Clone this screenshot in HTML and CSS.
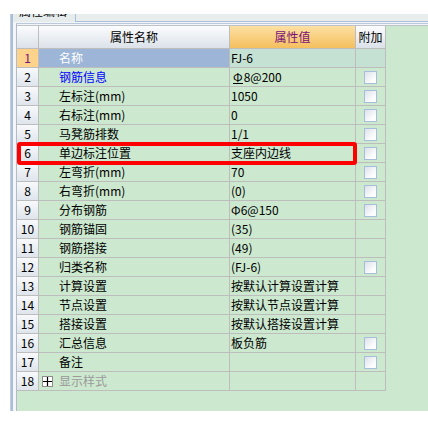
FILE: index.html
```html
<!DOCTYPE html>
<html lang="zh-CN">
<head>
<meta charset="utf-8">
<title>属性编辑</title>
<link rel="stylesheet" href="styles.css">
</head>
<body>
<div class="window">
  <div class="inner">
    <div class="tabstrip">
      <div class="tab"><span class="tab-label">属性编辑</span></div>
      <div class="tabrest"></div>
    </div>
    <div class="panel">
      <div class="sheet">
        <div class="grid-area">
          <table class="grid">
            <colgroup>
              <col class="c-num"><col class="c-name"><col class="c-val"><col class="c-add">
            </colgroup>
            <thead>
              <tr>
                <th class="h-plain"></th>
                <th class="h-plain">属性名称</th>
                <th class="h-active">属性值</th>
                <th class="h-plain">附加</th>
              </tr>
            </thead>
            <tbody>
              <tr class="sel">
                <td class="num num-sel">1</td>
                <td class="name name-sel">名称</td>
                <td class="val val-sel">FJ-6</td>
                <td class="add add-sel"></td>
              </tr>
              <tr>
                <td class="num">2</td>
                <td class="name link">钢筋信息</td>
                <td class="val"><span class="bar-sym">Φ</span>8@200</td>
                <td class="add"><span class="cb"></span></td>
              </tr>
              <tr>
                <td class="num">3</td>
                <td class="name">左标注(mm)</td>
                <td class="val">1050</td>
                <td class="add"><span class="cb"></span></td>
              </tr>
              <tr>
                <td class="num">4</td>
                <td class="name">右标注(mm)</td>
                <td class="val">0</td>
                <td class="add"><span class="cb"></span></td>
              </tr>
              <tr>
                <td class="num">5</td>
                <td class="name">马凳筋排数</td>
                <td class="val">1/1</td>
                <td class="add"><span class="cb"></span></td>
              </tr>
              <tr>
                <td class="num">6</td>
                <td class="name">单边标注位置</td>
                <td class="val">支座内边线</td>
                <td class="add"><span class="cb"></span></td>
              </tr>
              <tr>
                <td class="num">7</td>
                <td class="name">左弯折(mm)</td>
                <td class="val">70</td>
                <td class="add"><span class="cb"></span></td>
              </tr>
              <tr>
                <td class="num">8</td>
                <td class="name">右弯折(mm)</td>
                <td class="val">(0)</td>
                <td class="add"><span class="cb"></span></td>
              </tr>
              <tr>
                <td class="num">9</td>
                <td class="name">分布钢筋</td>
                <td class="val">Φ6@150</td>
                <td class="add"><span class="cb"></span></td>
              </tr>
              <tr>
                <td class="num">10</td>
                <td class="name">钢筋锚固</td>
                <td class="val">(35)</td>
                <td class="add"></td>
              </tr>
              <tr>
                <td class="num">11</td>
                <td class="name">钢筋搭接</td>
                <td class="val">(49)</td>
                <td class="add"></td>
              </tr>
              <tr>
                <td class="num">12</td>
                <td class="name">归类名称</td>
                <td class="val">(FJ-6)</td>
                <td class="add"><span class="cb"></span></td>
              </tr>
              <tr>
                <td class="num">13</td>
                <td class="name">计算设置</td>
                <td class="val">按默认计算设置计算</td>
                <td class="add"></td>
              </tr>
              <tr>
                <td class="num">14</td>
                <td class="name">节点设置</td>
                <td class="val">按默认节点设置计算</td>
                <td class="add"></td>
              </tr>
              <tr>
                <td class="num">15</td>
                <td class="name">搭接设置</td>
                <td class="val">按默认搭接设置计算</td>
                <td class="add"></td>
              </tr>
              <tr>
                <td class="num">16</td>
                <td class="name">汇总信息</td>
                <td class="val">板负筋</td>
                <td class="add"><span class="cb"></span></td>
              </tr>
              <tr>
                <td class="num">17</td>
                <td class="name">备注</td>
                <td class="val"></td>
                <td class="add"><span class="cb"></span></td>
              </tr>
              <tr>
                <td class="num">18</td>
                <td class="name group"><span class="expander"><svg width="9" height="9" viewBox="0 0 9 9"><path d="M0 4.5H9M4.5 0V9" stroke="#000" stroke-width="1.2"/></svg></span><span class="group-label">显示样式</span></td>
                <td class="val"></td>
                <td class="add"></td>
              </tr>
            </tbody>
          </table>
          <div class="mark"></div>
        </div>
      </div>
    </div>
  </div>
</div>
</body>
</html>
```

FILE: styles.css
```css
* { box-sizing: border-box; }

body {
  margin: 0;
  background: #ffffff;
  font-family: "Noto Sans CJK SC", "Noto Sans", sans-serif;
  font-size: 12px;
  color: #000;
}

.window {
  margin: 14px 0 0 10px;
  height: 397px;
  border-left: 1px solid #c6cfd9;
}

.inner {
  height: 100%;
  border-left: 2px solid #a9bed9;
  display: flex;
  flex-direction: column;
}

.tabstrip {
  display: flex;
  height: 8px;
  flex: none;
}

.tab {
  width: 63px;
  height: 8px;
  background: #e6ecec;
  border-right: 1px solid #a9bed9;
  overflow: hidden;
  padding-left: 6px;
}

.tab-label {
  display: block;
  line-height: 12px;
  margin-top: -9px;
  white-space: nowrap;
}

.tabrest {
  flex: 1;
  background: #e8eded;
  border-bottom: 1px solid #a9bed9;
}

.panel {
  flex: 1;
  background: #f3f5f8;
  padding: 1px 0 0 3px;
  display: flex;
  flex-direction: column;
}

.sheet {
  flex: 1;
  border-top: 1px solid #b9c8da;
  border-left: 1px solid #b3bcc6;
  padding-top: 1px;
  display: flex;
  flex-direction: column;
}

.grid-area {
  flex: 1;
  position: relative;
  background: #cce8cf;
  border-top: 1px solid #bcc2c8;
}

.grid {
  border-collapse: separate;
  border-spacing: 0;
  table-layout: fixed;
  width: 369px;
}

.c-num { width: 22px; }
.c-name { width: 191px; }
.c-val { width: 126px; }
.c-add { width: 30px; }

.grid th,
.grid td {
  padding: 0;
  border-right: 1px solid #bdbdbd;
  border-bottom: 1px solid #bdbdbd;
  white-space: nowrap;
  overflow: hidden;
}

.grid thead tr { height: 23px; }
.grid tbody tr { height: 19px; }

.grid th {
  font-weight: normal;
  text-align: center;
  line-height: 22px;
}

.grid .h-plain {
  background: linear-gradient(#fbfcfd, #dce2ea);
  color: #000;
}

.grid .h-active {
  background: linear-gradient(#fde0a4, #f4bf5e);
  color: #7a1078;
}

.grid td {
  line-height: 18px;
  vertical-align: top;
}

.grid .num {
  text-align: center;
  background: linear-gradient(#f8f9fb, #dfe5ec);
}

.grid .num-sel {
  background: #fdd38b;
  color: #7a1078;
}

.grid .name { padding-left: 20px; }
.grid .name-sel { background: #9db5d6; color: #ffffff; }
.grid .link { color: #0000ff; }

.grid .val { padding-left: 1px; }
.grid .val-sel,
.grid .add-sel { background: #c4e1d3; }

.bar-sym {
  display: inline-block;
  line-height: 13px;
  border-bottom: 1px solid #000;
  margin: 0 1px 0 2px;
}

.cb {
  display: block;
  width: 13px;
  height: 13px;
  margin: 3px auto 0;
  border: 1px solid #a6bedc;
  background: linear-gradient(135deg, #dde2e8 0%, #fdfdfd 75%);
}

.grid .group { padding-left: 3px; }

.expander {
  display: inline-flex;
  align-items: center;
  justify-content: center;
  width: 11px;
  height: 11px;
  margin-top: 4px;
  vertical-align: top;
  border: 1px solid #8d8d8d;
  background: #ffffff;
}

.group-label {
  margin-left: 6px;
  color: #9a9a9a;
}

.mark {
  position: absolute;
  left: 0;
  top: 116px;
  width: 340px;
  height: 23px;
  border: 4px solid #ff0000;
  border-radius: 3px;
}
```
